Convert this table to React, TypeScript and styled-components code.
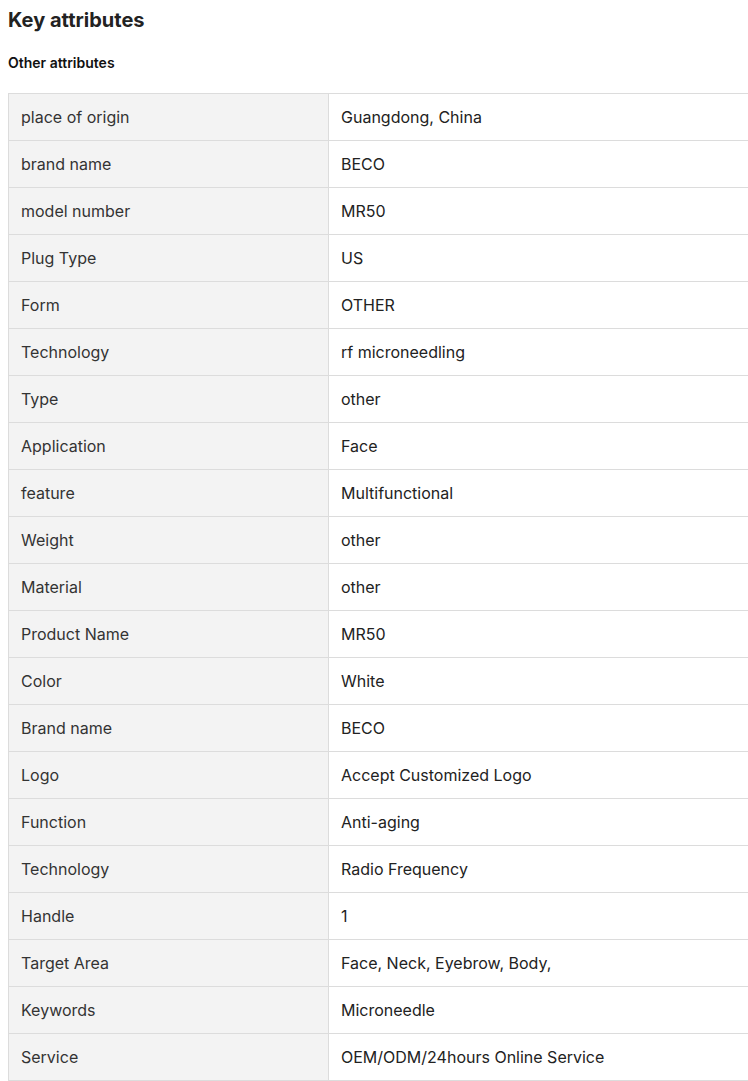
import React from "react";
import styled, { createGlobalStyle } from "styled-components";

const GlobalStyle = createGlobalStyle`
  body {
    margin: 0;
    background: #fff;
    font-family: Inter, "Noto Sans", Arial, sans-serif;
    color: #222;
  }
`;

const Page = styled.div`
  padding: 8px 0 0 8px;
  overflow: hidden;
`;

const Title = styled.h2`
  margin: 0;
  font-size: 20px;
  line-height: 24px;
  font-weight: 700;
  color: #222;
`;

const SubTitle = styled.h3`
  margin: 20px 0 0;
  font-size: 14px;
  line-height: 22px;
  font-weight: 600;
  color: #111;
`;

const Table = styled.table`
  margin-top: 19px;
  width: 760px;
  border-collapse: collapse;
  table-layout: fixed;
  font-size: 16px;
`;

const Cell = styled.td<{ $label?: boolean }>`
  height: 47px;
  padding: 0 12px;
  border: 1px solid #dcdcdc;
  background: ${({ $label }) => ($label ? "#f3f3f3" : "#fff")};
  color: ${({ $label }) => ($label ? "#333" : "#222")};
  width: ${({ $label }) => ($label ? "320px" : "auto")};
  box-sizing: border-box;
  vertical-align: middle;
  white-space: nowrap;
`;

const rows: [string, string][] = [
  ["place of origin", "Guangdong, China"],
  ["brand name", "BECO"],
  ["model number", "MR50"],
  ["Plug Type", "US"],
  ["Form", "OTHER"],
  ["Technology", "rf microneedling"],
  ["Type", "other"],
  ["Application", "Face"],
  ["feature", "Multifunctional"],
  ["Weight", "other"],
  ["Material", "other"],
  ["Product Name", "MR50"],
  ["Color", "White"],
  ["Brand name", "BECO"],
  ["Logo", "Accept Customized Logo"],
  ["Function", "Anti-aging"],
  ["Technology", "Radio Frequency"],
  ["Handle", "1"],
  ["Target Area", "Face, Neck, Eyebrow, Body,"],
  ["Keywords", "Microneedle"],
  ["Service", "OEM/ODM/24hours Online Service"],
];

const App = () => {
  return (
    <Page>
      <GlobalStyle />
      <Title>Key attributes</Title>
      <SubTitle>Other attributes</SubTitle>
      <Table>
        <tbody>
          {rows.map(([label, value], i) => (
            <tr key={i}>
              <Cell $label>{label}</Cell>
              <Cell>{value}</Cell>
            </tr>
          ))}
        </tbody>
      </Table>
    </Page>
  );
};

export default App;
